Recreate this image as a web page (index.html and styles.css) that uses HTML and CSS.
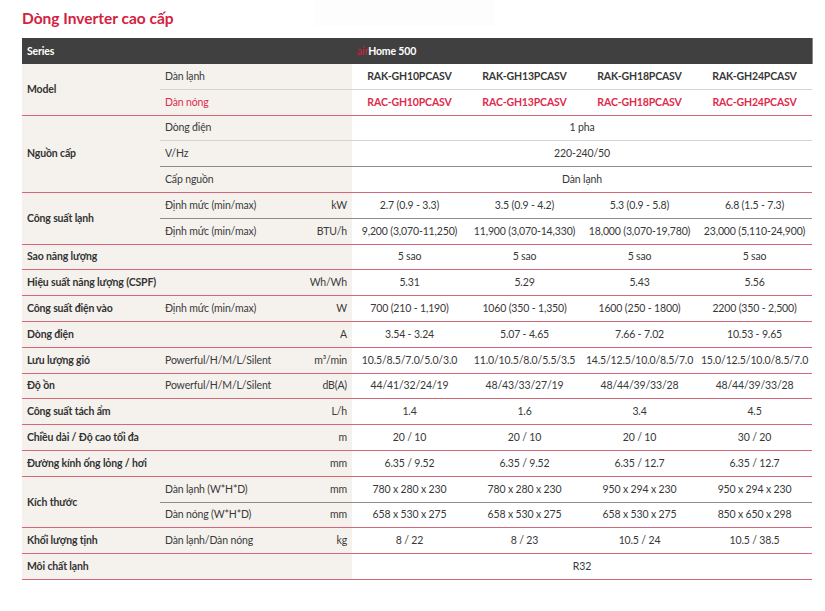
FILE: index.html
```html
<!DOCTYPE html>
<html lang="vi">
<head>
<meta charset="utf-8">
<title>Dòng Inverter cao cấp</title>
<link rel="stylesheet" href="styles.css">
</head>
<body>
<div class="top-shade"></div>
<h2 class="title">Dòng Inverter cao cấp</h2>
<table class="spec">
  <colgroup>
    <col class="c-label"><col class="c-sub"><col class="c-unit">
    <col class="c-val"><col class="c-val"><col class="c-val"><col class="c-val">
  </colgroup>
  <thead>
    <tr class="head">
      <th colspan="3">Series</th>
      <th colspan="4" class="series"><span class="air">air</span>Home 500</th>
    </tr>
  </thead>
  <tbody>
    <tr class="light">
      <td rowspan="2" class="lab g-end">Model</td>
      <td colspan="2" class="sub">Dàn lạnh</td>
      <td class="val model">RAK-GH10PCASV</td><td class="val model">RAK-GH13PCASV</td><td class="val model">RAK-GH18PCASV</td><td class="val model">RAK-GH24PCASV</td>
    </tr>
    <tr class="g-end">
      <td colspan="2" class="sub red">Dàn nóng</td>
      <td class="val model red">RAC-GH10PCASV</td><td class="val model red">RAC-GH13PCASV</td><td class="val model red">RAC-GH18PCASV</td><td class="val model red">RAC-GH24PCASV</td>
    </tr>

    <tr class="light">
      <td rowspan="3" class="lab g-end">Nguồn cấp</td>
      <td colspan="2" class="sub">Dòng điện</td>
      <td colspan="4" class="val">1 pha</td>
    </tr>
    <tr class="dark">
      <td colspan="2" class="sub">V/Hz</td>
      <td colspan="4" class="val">220-240/50</td>
    </tr>
    <tr class="g-end">
      <td colspan="2" class="sub">Cấp nguồn</td>
      <td colspan="4" class="val">Dàn lạnh</td>
    </tr>

    <tr class="dark">
      <td rowspan="2" class="lab g-end">Công suất lạnh</td>
      <td class="sub">Định mức (min/max)</td><td class="unit">kW</td>
      <td class="val">2.7 (0.9 - 3.3)</td><td class="val">3.5 (0.9 - 4.2)</td><td class="val">5.3 (0.9 - 5.8)</td><td class="val">6.8 (1.5 - 7.3)</td>
    </tr>
    <tr class="g-end">
      <td class="sub">Định mức (min/max)</td><td class="unit">BTU/h</td>
      <td class="val">9,200 (3,070-11,250)</td><td class="val">11,900 (3,070-14,330)</td><td class="val">18,000 (3,070-19,780)</td><td class="val">23,000 (5,110-24,900)</td>
    </tr>

    <tr class="g-end">
      <td colspan="3" class="lab">Sao năng lượng</td>
      <td class="val">5 sao</td><td class="val">5 sao</td><td class="val">5 sao</td><td class="val">5 sao</td>
    </tr>
    <tr class="g-end">
      <td colspan="2" class="lab">Hiệu suất năng lượng (CSPF)</td><td class="unit">Wh/Wh</td>
      <td class="val">5.31</td><td class="val">5.29</td><td class="val">5.43</td><td class="val">5.56</td>
    </tr>
    <tr class="g-end">
      <td class="lab">Công suất điện vào</td><td class="sub">Định mức (min/max)</td><td class="unit">W</td>
      <td class="val">700 (210 - 1,190)</td><td class="val">1060 (350 - 1,350)</td><td class="val">1600 (250 - 1800)</td><td class="val">2200 (350 - 2,500)</td>
    </tr>
    <tr class="g-end">
      <td colspan="2" class="lab">Dòng điện</td><td class="unit">A</td>
      <td class="val">3.54 - 3.24</td><td class="val">5.07 - 4.65</td><td class="val">7.66 - 7.02</td><td class="val">10.53 - 9.65</td>
    </tr>
    <tr class="g-end">
      <td class="lab">Lưu lượng gió</td><td class="sub">Powerful/H/M/L/Silent</td><td class="unit">m³/min</td>
      <td class="val">10.5/8.5/7.0/5.0/3.0</td><td class="val">11.0/10.5/8.0/5.5/3.5</td><td class="val">14.5/12.5/10.0/8.5/7.0</td><td class="val">15.0/12.5/10.0/8.5/7.0</td>
    </tr>
    <tr class="g-end">
      <td class="lab">Độ ồn</td><td class="sub">Powerful/H/M/L/Silent</td><td class="unit">dB(A)</td>
      <td class="val">44/41/32/24/19</td><td class="val">48/43/33/27/19</td><td class="val">48/44/39/33/28</td><td class="val">48/44/39/33/28</td>
    </tr>
    <tr class="g-end">
      <td colspan="2" class="lab">Công suất tách ẩm</td><td class="unit">L/h</td>
      <td class="val">1.4</td><td class="val">1.6</td><td class="val">3.4</td><td class="val">4.5</td>
    </tr>
    <tr class="g-end">
      <td colspan="2" class="lab">Chiều dài / Độ cao tối đa</td><td class="unit">m</td>
      <td class="val">20 / 10</td><td class="val">20 / 10</td><td class="val">20 / 10</td><td class="val">30 / 20</td>
    </tr>
    <tr class="g-end">
      <td colspan="2" class="lab">Đường kính ống lỏng / hơi</td><td class="unit">mm</td>
      <td class="val">6.35 / 9.52</td><td class="val">6.35 / 9.52</td><td class="val">6.35 / 12.7</td><td class="val">6.35 / 12.7</td>
    </tr>

    <tr class="dark">
      <td rowspan="2" class="lab g-end">Kích thước</td>
      <td class="sub">Dàn lạnh (W*H*D)</td><td class="unit">mm</td>
      <td class="val">780 x 280 x 230</td><td class="val">780 x 280 x 230</td><td class="val">950 x 294 x 230</td><td class="val">950 x 294 x 230</td>
    </tr>
    <tr class="g-end">
      <td class="sub">Dàn nóng (W*H*D)</td><td class="unit">mm</td>
      <td class="val">658 x 530 x 275</td><td class="val">658 x 530 x 275</td><td class="val">658 x 530 x 275</td><td class="val">850 x 650 x 298</td>
    </tr>

    <tr class="g-end">
      <td class="lab">Khối lượng tịnh</td><td class="sub">Dàn lạnh/Dàn nóng</td><td class="unit">kg</td>
      <td class="val">8 / 22</td><td class="val">8 / 23</td><td class="val">10.5 / 24</td><td class="val">10.5 / 38.5</td>
    </tr>
    <tr class="g-end">
      <td colspan="3" class="lab">Môi chất lạnh</td>
      <td colspan="4" class="val">R32</td>
    </tr>
  </tbody>
</table>
</body>
</html>
```

FILE: styles.css
```css
html, body {
  margin: 0;
  padding: 0;
  background: #ffffff;
}

body {
  padding: 0 13px 0 22px;
  font-family: Lato, "Noto Sans", sans-serif;
  color: #3a3a3a;
  position: relative;
}

.top-shade {
  position: absolute;
  left: 315px;
  top: 0;
  width: 180px;
  height: 26px;
  background: #fdfdfd;
}

.title {
  position: relative;
  margin: 0;
  padding-top: 8px;
  height: 30px;
  font-size: 15.5px;
  font-weight: 700;
  line-height: 20px;
  color: #d3223e;
}

.spec {
  width: 790px;
  border-collapse: collapse;
  table-layout: fixed;
  font-size: 10.5px;
  letter-spacing: -0.15px;
}

.c-label { width: 138px; }
.c-sub { width: 140px; }
.c-unit { width: 52px; }
.c-val { width: 115px; }

.spec th,
.spec td {
  height: 24.8px;
  padding: 0 5px;
  line-height: 13px;
  white-space: nowrap;
  vertical-align: middle;
}

.spec td.val {
  padding: 0 2px;
}

.head th {
  background: #404040;
  color: #ffffff;
  font-weight: 700;
  text-align: left;
  height: 26px;
}

.head th:last-child {
  border-right: 1px solid #8a8a8a;
}

.air {
  color: #d3223e;
  font-weight: 400;
}

.lab,
.sub,
.unit {
  background: #f5f2ee;
}

.lab {
  font-weight: 700;
  color: #333333;
}

.sub {
  color: #3a3a3a;
}

.unit {
  text-align: right;
  color: #3a3a3a;
}

.val {
  text-align: center;
  color: #383838;
}

.model {
  font-weight: 700;
}

.red {
  color: #de2b4b;
}

.light td {
  border-bottom: 1px solid #d4d4d4;
}

.dark td {
  border-bottom: 1px solid #8c8c8c;
}

.g-end td,
td.g-end {
  border-bottom: 1px solid #d4687a;
}
```
